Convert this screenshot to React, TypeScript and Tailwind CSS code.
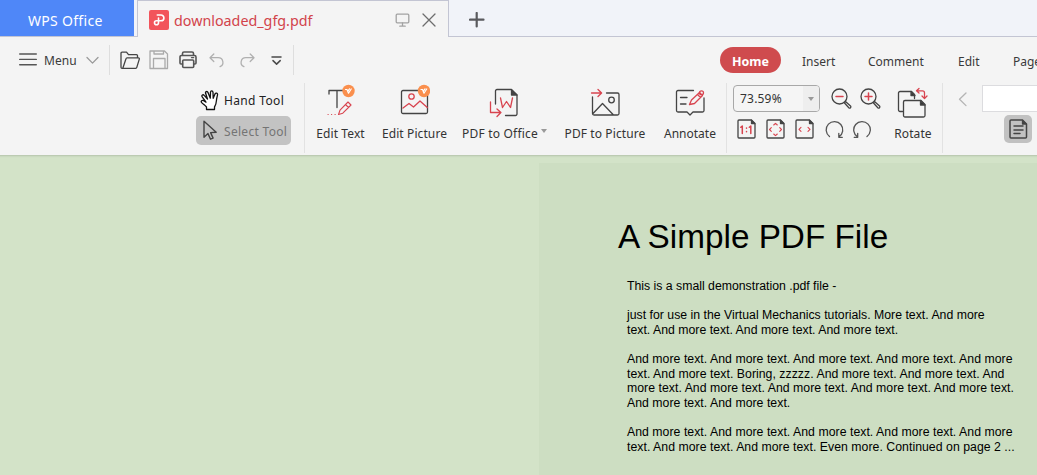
import React from "react";

type IconProps = { w: number; h: number; className?: string; children: React.ReactNode };

function Icon({ w, h, className = "", children }: IconProps) {
  return (
    <svg
      width={w}
      height={h}
      viewBox={`0 0 ${w} ${h}`}
      fill="none"
      stroke="#444"
      strokeWidth="1.3"
      strokeLinecap="round"
      strokeLinejoin="round"
      className={`block shrink-0 ${className}`}
    >
      {children}
    </svg>
  );
}

const RED = "#d8444f";

function TitleBar() {
  return (
    <header className="flex h-[37px] shrink-0 bg-[#f1f3f9]">
      <div className="flex w-[137px] border-b border-[#c3c5d3] bg-[#f1f3f9]">
        <div className="h-9 w-[134px] bg-[#4f87f8] pl-7 text-[14px] leading-[41px] tracking-[0.3px] text-white">
          WPS Office
        </div>
      </div>
      <div className="flex w-[312px] border-x border-t border-[#c3c5d3] bg-[#f4f4f4] pl-[11px]">
        <div className="mt-[9px] h-5 w-5 rounded-[2px] bg-[#f2545b]">
          <Icon w={20} h={20}>
            <path
              d="M8.3 5H12a2.9 2.900 0 0 1 0 5.800H7.500a2 2 0 1 0 2 2V8"
              stroke="#fff"
              strokeWidth="1.6"
            />
          </Icon>
        </div>
        <div className="ml-[5px] w-[221px] text-[14.3px] leading-[39px] text-[#d2434b]">
          downloaded_gfg.pdf
        </div>
        <Icon w={16} h={15} className="mt-[12px]">
          <g stroke="#a2a2a2">
            <rect x="1.2" y="1.2" width="12.6" height="8.6" rx="1" />
            <path d="M7.5 10v3M4.8 13.2h5.4" />
          </g>
        </Icon>
        <Icon w={14} h={14} className="mt-[12px] ml-[11px]">
          <path d="M1 1l12 12M13 1L1 13" stroke="#6d6d6d" />
        </Icon>
      </div>
      <div className="flex flex-1 border-b border-[#c3c5d3] pt-3 pl-5">
        <Icon w={16} h={16}>
          <path d="M7.7 1v13.5M1 7.7h13.5" stroke="#5a5a5e" strokeWidth="2.2" />
        </Icon>
      </div>
    </header>
  );
}

function MenuRow() {
  return (
    <nav className="flex h-[46px] shrink-0 items-center text-[12px] text-[#3a3a3a]">
      <Icon w={18} h={16} className="ml-[19px]">
        <path d="M.7 2h16.6M.7 7.4h16.6M.7 12.8h16.6" stroke="#555" strokeWidth="1.4" />
      </Icon>
      <span className="ml-[7px] w-[42px] shrink-0 pt-[2px] tracking-[0.1px]">Menu</span>
      <Icon w={13} h={9}>
        <path d="M1 1.5l5.5 5.6L12 1.5" stroke="#9a9a9a" />
      </Icon>
      <span className="ml-[10px] h-[30px] w-px shrink-0 bg-[#dedede]" />
      <Icon w={21} h={19} className="ml-[10px]">
        <path
          d="M4 17.3H2a1 1 0 0 1-1-1V2.2a1 1 0 0 1 1-1h4.500l2 2.500h8a1 1 0 0 1 1 1v2M4 17.300H2.800L6 7.700a1.200 1.200 0 0 1 1.100-.9h11.200a1 1 0 0 1 1 1.300l-2.500 8.300a1.200 1.200 0 0 1-1.100.9z"
        />
      </Icon>
      <Icon w={20} h={20} className="ml-[8px]">
        <g stroke="#aaa">
          <path d="M1 1h14.500l3 3v14.500H1zM5 1v3h9.500V1M4.500 18.500V8.500h11.500v10" />
        </g>
      </Icon>
      <Icon w={19} h={18} className="ml-[10px]">
        <path
          d="M3.500 13H2a1 1 0 0 1-1-1V6a1.500 1.500 0 0 1 1.500-1.500h13A1.500 1.500 0 0 1 17 6v6a1 1 0 0 1-1 1H15M3.500 4.500v-2A1.500 1.500 0 0 1 5 1h8a1.500 1.500 0 0 1 1.500 1.500v2"
          stroke="#555"
          strokeWidth="1.6"
        />
        <rect x="3.700" y="9" width="11" height="7.500" rx="1" stroke="#555" strokeWidth="1.600" />
        <path d="M12.500 6.600h2.200" stroke="#555" />
      </Icon>
      <Icon w={17} h={15} className="ml-[11px]">
        <path d="M4.800 1L1 4.700l3.800 3.800M1.300 4.700h7.800a4.700 4.700 0 0 1 2 9" stroke="#b0b0b0" />
      </Icon>
      <Icon w={17} h={15} className="ml-[13px]">
        <path d="M11.200 1L15 4.700l-3.800 3.800M14.700 4.700H6.900a4.700 4.700 0 0 0-2 9" stroke="#b0b0b0" />
      </Icon>
      <Icon w={12} h={10} className="mt-[2px] ml-[15px]">
        <path d="M1 1h9M2 4.600l3.600 3.500 3.600-3.500" stroke="#4a4a4a" strokeWidth="1.500" />
      </Icon>
      <span className="ml-[10px] h-[30px] w-px shrink-0 bg-[#dedede]" />
      <span className="ml-[426px] h-[26px] w-[61px] shrink-0 rounded-full bg-[#cf4b4e] text-center text-[12.500px] leading-[29px] font-bold text-white">
        Home
      </span>
      <span className="mt-[3px] ml-[21px] w-[66px] shrink-0">Insert</span>
      <span className="mt-[3px] w-[90px] shrink-0">Comment</span>
      <span className="mt-[3px] w-[55px] shrink-0">Edit</span>
      <span className="mt-[3px] shrink-0">Page</span>
    </nav>
  );
}

function Badge({ x, y }: { x: number; y: number }) {
  return (
    <g transform={`translate(${x} ${y})`}>
      <circle r="6.200" fill="#fa8f4d" stroke="none" />
      <path d="M-3-1.500h1.500L0 2.200 2.700-2M-.4-.2L1-2.200" stroke="#fff" strokeWidth="1.200" />
    </g>
  );
}

function Tile({ className, label, children }: { className: string; label: string; children: React.ReactNode }) {
  return (
    <div className={`flex shrink-0 flex-col items-center ${className}`}>
      <div className="h-[42px]">{children}</div>
      <span className="leading-[17px] whitespace-nowrap">{label}</span>
    </div>
  );
}

function Divider() {
  return <span className="h-[70px] w-px shrink-0 bg-[#e2e2e2]" />;
}

function PageGlyph({ children }: { children: React.ReactNode }) {
  return (
    <Icon w={20} h={21}>
      <path d="M2 1h12l4 4v13a1 1 0 0 1-1 1H2a1 1 0 0 1-1-1V2a1 1 0 0 1 1-1z" />
      <path d="M14.500 1l3.500 3.500h-3.500z" fill="#444" />
      <g stroke={RED}>{children}</g>
    </Icon>
  );
}

function Toolbar() {
  return (
    <section className="flex h-[72px] shrink-0 overflow-hidden text-[12px] text-[#333]">
      <div className="ml-[196px] flex w-[108px] shrink-0 flex-col">
        <div className="mt-[4px] flex h-[26px] items-center pl-1">
          <Icon w={21} h={21}>
            <path
              d="M6.500 19.500v-2.500C5 15.200 2.800 14 1.500 12.400.6 11 2.200 9.800 3.700 10.600l2.300 1.500-3.800-5.200C1.200 5.200 3 4 4.200 5.400L7.500 9 5.600 3.300C5.100 1.500 7.300.8 8 2.600l2.300 5.600.2-6c.1-1.700 2.300-1.600 2.500.1l.2 6 1.800-4.400c.8-1.500 2.900-.8 2.500.9l-.9 4.200c-.3 3.500-.3 5.500-2.100 8v2.500z"
              fill="#fff"
              stroke="#111"
              strokeWidth="1.300"
            />
          </Icon>
          <span className="ml-[3px] pt-[2px] tracking-[0.350px] text-[#222]">Hand Tool</span>
        </div>
        <div className="mt-[3px] flex h-[29px] w-[95px] items-center rounded-[5px] bg-[#c3c3c3] pl-[7px] text-[#747474]">
          <Icon w={15} h={21}>
            <path d="M1 1.200v16l4-3.600 2.500 5.600 2.600-1.100-2.500-5.500 5.600-.4z" strokeWidth="1.400" />
          </Icon>
          <span className="ml-[6px] pt-[2px] tracking-[0.300px] whitespace-nowrap">Select Tool</span>
        </div>
      </div>
      <Divider />

      <Tile className="ml-[6px] w-[59px] tracking-[0.100px]" label="Edit Text">
        <Icon w={31} h={34}>
          <path d="M4 11V7.500h15M12 7.500V24.500" />
          <path d="M3 31.500h.2M6.500 31.500h.2M10 31.500h.2M13.500 31.500l1.500-4.300 8-8.200 3 3-8.200 8.200zM20.500 21.500l3 3" stroke={RED} strokeWidth="1.100" />
          <Badge x={23.500} y={8} />
        </Icon>
      </Tile>
      <Tile className="ml-[7px] w-[75px] tracking-[0.100px]" label="Edit Picture">
        <Icon w={31} h={34}>
          <rect x="2.500" y="7.500" width="26" height="23" rx="1.500" />
          <g stroke={RED}>
            <circle cx="12.500" cy="13.500" r="2.700" />
            <path d="M4 25l6-4.500 4.500 3.500 6.500-6 7.300 6.500" />
          </g>
          <Badge x={25} y={8} />
        </Icon>
      </Tile>
      <div className="relative ml-[6px]">
        <Tile className="w-[84px] tracking-[0.200px]" label="PDF to Office">
          <Icon w={32} h={38} className="ml-[9px]">
            <path d="M6.500 21V8A1.500 1.500 0 0 1 8 6.500h14.500l5.500 5.500V31a1.500 1.500 0 0 1-1.500 1.500H16.500" />
            <path d="M22.500 7v5H28z" fill="#444" />
            <path d="M11.500 15l2 9.500 4-6 4 6 2-9.500M1.500 19v10.500h10.300M8 26l3.900 3.500L8 33.500" stroke={RED} />
          </Icon>
        </Tile>
        <span className="absolute top-[46px] left-[83px] border-x-[3px] border-t-[4px] border-x-transparent border-t-[#999]" />
      </div>
      <Tile className="ml-[17px] w-[92px] tracking-[0.100px]" label="PDF to Picture">
        <Icon w={30} h={34} className="mr-[1px]">
          <path d="M2.500 14v16.500A1.500 1.500 0 0 0 4 32h23.500a1.500 1.500 0 0 0 1.500-1.500V11.500A1.500 1.500 0 0 0 27.500 10H16.500M3 30.500l9.500-10L23.500 32" />
          <circle cx="21.500" cy="17" r="2.800" />
          <path d="M1.500 10h10M8 6.500l3.600 3.500L8 13.500" stroke={RED} />
        </Icon>
      </Tile>
      <Tile className="ml-[8px] w-[62px]" label="Annotate">
        <Icon w={31} h={35}>
          <path d="M18.500 7.500H3A1.500 1.500 0 0 0 1.500 9v18.500A1.500 1.500 0 0 0 3 29h9l3 3 3-3h9.500a1.500 1.500 0 0 0 1.500-1.500V15M5.500 14.500h6.500M5.500 21h5.500" />
          <path d="M14.500 21.500l2-4.500 8-7.500 3 3-8 8zM22.500 11.500l3 3" stroke={RED} />
          <circle cx="26.500" cy="9.800" r="2" stroke={RED} />
        </Icon>
      </Tile>
      <span className="w-[5px] shrink-0" />
      <Divider />

      <div className="ml-[6px] flex w-[156px] shrink-0 flex-col pt-[2px]">
        <div className="flex h-[27px] items-center">
          <div className="flex h-[27px] w-[87px] items-center overflow-hidden rounded-[4px] border border-[#a8a8a8] bg-[#f5f5f5]">
            <span className="w-[70px] pt-px pl-[6px] tracking-[0.200px]">73.59%</span>
            <span className="flex h-full w-[16px] items-center justify-center bg-[#eee]">
              <span className="border-x-[3px] border-t-[4px] border-x-transparent border-t-[#999]" />
            </span>
          </div>
          <Icon w={21} h={21} className="ml-[11px]">
            <circle cx="8.500" cy="8.500" r="7.500" />
            <path d="M14.500 13.500l5 4.500a1.200 1.200 0 0 1-1.700 1.700L13.500 15z" />
            <path d="M5 8.500h7" stroke={RED} strokeWidth="1.500" />
          </Icon>
          <Icon w={21} h={21} className="ml-[8px]">
            <circle cx="8.500" cy="8.500" r="7.500" />
            <path d="M14.500 13.500l5 4.500a1.200 1.200 0 0 1-1.700 1.700L13.500 15z" />
            <path d="M5 8.500h7M8.500 5v7" stroke={RED} strokeWidth="1.500" />
          </Icon>
        </div>
        <div className="mt-[7px] ml-[4px] flex gap-[9px]">
          <PageGlyph>
            <path d="M3.800 8.300L5.300 7v7.500M12.300 8.300L13.800 7v7.500M9.500 9v.3M9.500 12.500v.3" strokeWidth="1.500" />
          </PageGlyph>
          <PageGlyph>
            <path d="M7.700 6l1.800-1.600L11.300 6M7.700 15l1.800 1.600 1.800-1.600M5.300 8.700l-1.800 1.800 1.800 1.800M13.700 8.700l1.800 1.800-1.800 1.800" strokeWidth="1.100" />
          </PageGlyph>
          <PageGlyph>
            <path d="M6 8.300l-2 2 2 2M13 8.300l2 2-2 2" strokeWidth="1.100" />
          </PageGlyph>
          <Icon w={20} h={21}>
            <path d="M5.500 17.500a8.300 8.300 0 1 1 9.500.3M14.800 14.300v4h3.500" stroke="#555" />
          </Icon>
          <Icon w={20} h={21}>
            <path d="M14 17.500a8.300 8.300 0 1 0-9.500.3M4.700 14.300v4h-3.500" stroke="#555" />
          </Icon>
        </div>
      </div>
      <Tile className="w-[48px] tracking-[0.100px]" label="Rotate">
        <Icon w={32} h={37} className="mt-[2px] mr-[2px]">
          <path d="M6.500 26.500H4A1.500 1.500 0 0 1 2.500 25V8A1.500 1.500 0 0 1 4 6.500h11.500l3 3v4" />
          <path d="M15 6.500l4 4h-4z" fill="#333" />
          <path d="M9 15.500h16l4 4V30.500a1.500 1.500 0 0 1-1.500 1.500H9A1.500 1.500 0 0 1 7.500 30.500V17A1.500 1.500 0 0 1 9 15.500z" />
          <path d="M24.500 15.500l4.500 4.500h-4.500z" fill="#333" />
          <path d="M23 3.500l-2.500 2.300L23 8M20.700 5.800h5.800a2 2 0 0 1 2 2v5.500M26 11l2.500 2.600 2.500-2.600" stroke={RED} />
        </Icon>
      </Tile>
      <span className="w-[5px] shrink-0" />
      <Divider />

      <Icon w={10} h={15} className="mt-[9px] ml-[15px]">
        <path d="M8 1L1.500 7.300 8 13.600" stroke="#b4b4b4" />
      </Icon>
      <div className="ml-[14px] flex w-[55px] shrink-0 flex-col pt-[2px]">
        <div className="h-[27px] border-y border-l border-[#dcdcdf] bg-white" />
        <div className="mt-[3px] ml-[22px] h-[28px] w-[28px] rounded-[5px] bg-[#c1c1c1] pt-[4px] pl-[5px]">
          <Icon w={19} h={21}>
            <path d="M2 1h11.500l4 4v13a1 1 0 0 1-1 1H2a1 1 0 0 1-1-1V2a1 1 0 0 1 1-1zM5 7h9M5 11h9M5 14.500h6" strokeWidth="1.500" />
            <path d="M13.500 1.500l3.500 3.500h-3.500z" fill="#333" />
          </Icon>
        </div>
      </div>
    </section>
  );
}

function Document() {
  return (
    <main className="flex flex-1 overflow-hidden bg-[#d3e3c8] pt-2 pl-[539px] shadow-[inset_0_3px_2px_-2px_#b4c3aa]">
      <article className="w-[498px] shrink-0 bg-[#cddec2] font-['Liberation_Sans',Arial,sans-serif] text-black">
        <h1 className="mt-[54px] ml-[79px] text-[33.300px] leading-[40px]">A Simple PDF File</h1>
        <div className="mt-[22px] ml-[88px] text-[12.270px] leading-[14.600px] tracking-[0.035px] whitespace-nowrap">
          <p className="mb-[14.600px] tracking-normal">This is a small demonstration .pdf file -</p>
          <p className="mb-[14.600px] tracking-[0.010px]">
            just for use in the Virtual Mechanics tutorials. More text. And more
            <br />
            text. And more text. And more text. And more text.
          </p>
          <p className="mb-[14.600px]">
            And more text. And more text. And more text. And more text. And more
            <br />
            text. And more text. Boring, zzzzz. And more text. And more text. And
            <br />
            more text. And more text. And more text. And more text. And more text.
            <br />
            And more text. And more text.
          </p>
          <p>
            And more text. And more text. And more text. And more text. And more
            <br />
            text. And more text. And more text. Even more. Continued on page 2 ...
          </p>
        </div>
      </article>
    </main>
  );
}

export default function App() {
  return (
    <div className="flex h-[475px] w-[1037px] flex-col overflow-hidden bg-[#f4f4f4] font-['Noto_Sans',sans-serif]">
      <TitleBar />
      <MenuRow />
      <Toolbar />
      <Document />
    </div>
  );
}
